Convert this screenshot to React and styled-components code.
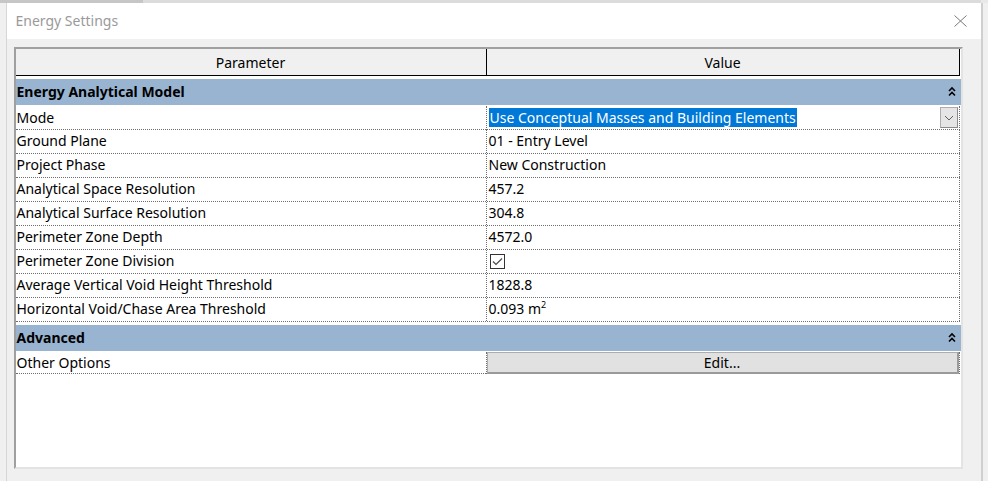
import React from 'react'
import styled, { createGlobalStyle } from 'styled-components'

const GlobalStyle = createGlobalStyle`
    body {
        margin: 0;
        background: #f0f0f0;
        font-family: "Noto Sans", "Open Sans", sans-serif;
        font-size: 14px;
        color: #000;
    }
`

const rows = [
    { name: 'Mode', value: 'Use Conceptual Masses and Building Elements', kind: 'select' },
    { name: 'Ground Plane', value: '01 - Entry Level' },
    { name: 'Project Phase', value: 'New Construction' },
    { name: 'Analytical Space Resolution', value: '457.2' },
    { name: 'Analytical Surface Resolution', value: '304.8' },
    { name: 'Perimeter Zone Depth', value: '4572.0' },
    { name: 'Perimeter Zone Division', kind: 'check' },
    { name: 'Average Vertical Void Height Threshold', value: '1828.8' },
    { name: 'Horizontal Void/Chase Area Threshold', value: '0.093', unit: 'm', sup: '2' },
]

function CollapseIcon() {
    return (
        <svg width="8" height="11" viewBox="0 0 8 11">
            <polyline points="1,5 4,2 7,5" fill="none" stroke="#000" strokeWidth="1.6" />
            <polyline points="1,9.5 4,6.5 7,9.5" fill="none" stroke="#000" strokeWidth="1.6" />
        </svg>
    )
}

function ValueCell({ row }) {
    if (row.kind === 'select') {
        return (
            <Value>
                <Selected>{row.value}</Selected>
                <DropButton>
                    <svg width="10" height="6" viewBox="0 0 10 6">
                        <polyline points="1,1 5,5 9,1" fill="none" stroke="#606060" strokeWidth="1" />
                    </svg>
                </DropButton>
            </Value>
        )
    }
    if (row.kind === 'check') {
        return (
            <Value>
                <CheckBox>
                    <svg width="11" height="9" viewBox="0 0 11 9">
                        <polyline points="1,4.5 4,7.5 10,1.5" fill="none" stroke="#4a4a4a" strokeWidth="1.2" />
                    </svg>
                </CheckBox>
            </Value>
        )
    }
    return (
        <Value>
            <span>
                {row.value}
                {row.unit ? <> {row.unit}<Sup>{row.sup}</Sup></> : null}
            </span>
        </Value>
    )
}

export default function App() {
    return (
        <>
            <GlobalStyle />
            <TopStrip />
            <Frame>
                <SideEdge />
                <Dialog>
                    <TitleBar>
                        <Title>Energy Settings</Title>
                        <Close>
                            <svg width="13" height="12" viewBox="0 0 13 12">
                                <line x1="0.5" y1="0.5" x2="12.5" y2="11.5" stroke="#7a7a7a" strokeWidth="1" />
                                <line x1="12.5" y1="0.5" x2="0.5" y2="11.5" stroke="#7a7a7a" strokeWidth="1" />
                            </svg>
                        </Close>
                    </TitleBar>
                    <Body>
                        <Grid>
                            <HeaderRow>
                                <HeaderCell>Parameter</HeaderCell>
                                <HeaderCell>Value</HeaderCell>
                            </HeaderRow>
                            <Group>
                                <span>Energy Analytical Model</span>
                                <CollapseIcon />
                            </Group>
                            {rows.map((row) => (
                                <Row key={row.name}>
                                    <Name>{row.name}</Name>
                                    <ValueCell row={row} />
                                </Row>
                            ))}
                            <Group>
                                <span>Advanced</span>
                                <CollapseIcon />
                            </Group>
                            <Row $short>
                                <Name>Other Options</Name>
                                <Value $button>
                                    <EditButton>Edit...</EditButton>
                                </Value>
                            </Row>
                        </Grid>
                    </Body>
                </Dialog>
                <SideEdge $right />
            </Frame>
        </>
    )
}

const TopStrip = styled.div`
    height: 3px;
    background: linear-gradient(to right, #c6c6c6 0 143px, #dcdcdc 143px 981px, #e8e8e8 981px);
`
const Frame = styled.div`
    display: flex;
    height: 478px;
`
const SideEdge = styled.div`
    flex: 1;
    background: #f0f0f0;
    ${(p) => p.$right
        ? 'border-left: 2px solid #cfcfcf;'
        : 'max-width: 6px; border-right: 1px solid #d6d6d6;'}
`
const Dialog = styled.div`
    width: 974px;
    display: flex;
    flex-direction: column;
`
const TitleBar = styled.div`
    height: 36px;
    background: #fff;
    display: flex;
    align-items: center;
    justify-content: space-between;
    padding: 0 14px 0 9px;
`
const Title = styled.div`
    font-size: 14px;
    color: #9a9a9a;
    margin-top: -1px;
`
const Close = styled.div`
    display: flex;
    margin-top: -1px;
`
const Body = styled.div`
    flex: 1;
    background: #f0f0f0;
    padding: 8px 18px 12px 7px;
`
const Grid = styled.div`
    height: 100%;
    box-sizing: border-box;
    background: #fff;
    border: 2px solid;
    border-color: #a0a0a0 #e3e3e3 #e3e3e3 #a0a0a0;
`
const HeaderRow = styled.div`
    display: grid;
    grid-template-columns: 471px 1fr;
    height: 27px;
    box-sizing: border-box;
    background: #f0f0f0;
    border-bottom: 1px solid #000;
    margin-right: 1px;
`
const HeaderCell = styled.div`
    display: flex;
    align-items: center;
    justify-content: center;
    border-right: 1px solid #000;
`
const Group = styled.div`
    display: flex;
    align-items: center;
    justify-content: space-between;
    height: 26px;
    margin: 3px 0 1px;
    padding: 0 5px 1px 1px;
    box-sizing: border-box;
    background: #99b4d1;
    font-weight: bold;
`
const Row = styled.div`
    display: grid;
    grid-template-columns: 471px 1fr;
    height: ${(p) => (p.$short ? '22px' : '24px')};
    box-sizing: border-box;
    border-bottom: 1px dotted #6e6e6e;
    margin-right: 1px;
`
const Name = styled.div`
    display: flex;
    align-items: center;
    padding: 0 0 2px 1px;
    border-right: 1px dotted #6e6e6e;
`
const Value = styled.div`
    display: flex;
    align-items: center;
    justify-content: space-between;
    padding: ${(p) => (p.$button ? '0' : '0 0 2px 2px')};
    border-right: 1px dotted #6e6e6e;
`
const Selected = styled.span`
    background: #0078d7;
    color: #fff;
    line-height: 19px;
    padding: 0 1px;
`
const DropButton = styled.div`
    width: 18px;
    height: 21px;
    box-sizing: border-box;
    margin: 1px 1px 0 0;
    display: flex;
    align-items: center;
    justify-content: center;
    background: #e5e5e5;
    border: 1px solid #adadad;
    border-right-color: #8a8a8a;
    border-bottom-color: #8a8a8a;
`
const CheckBox = styled.div`
    width: 15px;
    height: 15px;
    box-sizing: border-box;
    border: 1px solid #333;
    display: flex;
    align-items: center;
    justify-content: center;
    margin: 1px 0 0 1px;
`
const Sup = styled.sup`
    font-size: 9px;
    vertical-align: 6px;
    line-height: 0;
`
const EditButton = styled.div`
    flex: 1;
    height: 100%;
    box-sizing: border-box;
    display: flex;
    align-items: center;
    justify-content: center;
    background: #e1e1e1;
    border: 1px solid #adadad;
    border-right: 2px solid #9a9a9a;
    border-bottom: 2px solid #9a9a9a;
`
